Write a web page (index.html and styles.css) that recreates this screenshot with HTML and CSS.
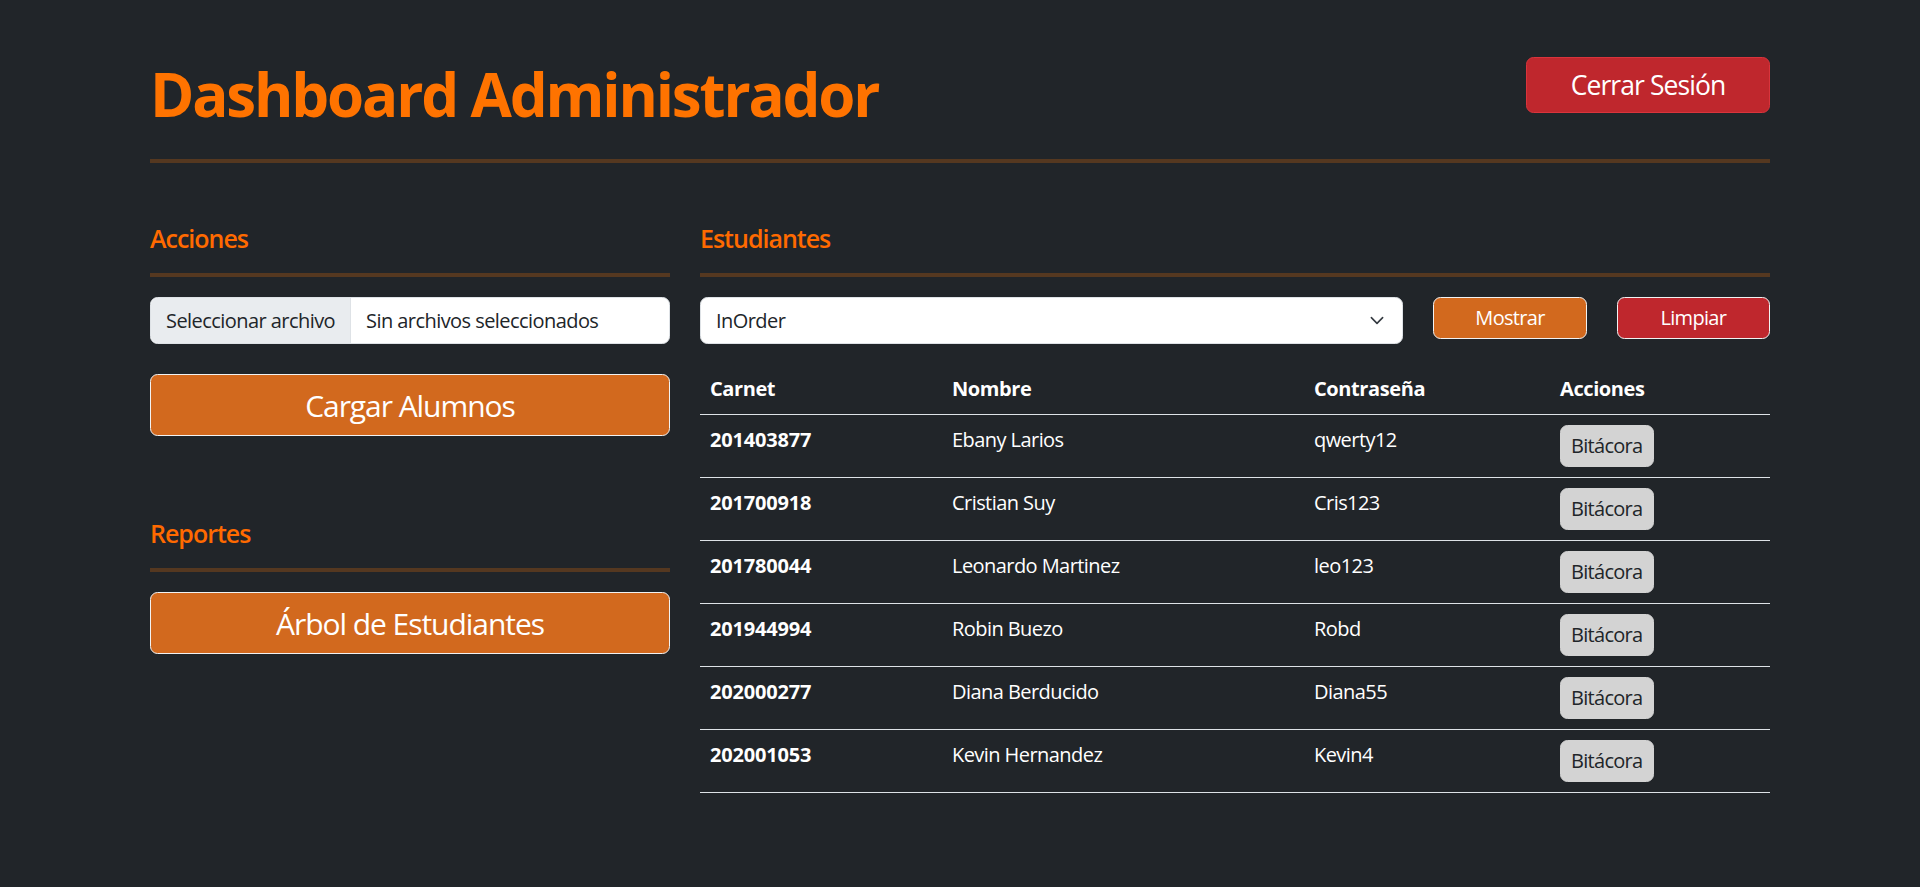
FILE: index.html
```html
<!DOCTYPE html>
<html lang="es">
<head>
<meta charset="utf-8">
<title>Dashboard Administrador</title>
<link rel="stylesheet" href="styles.css">
</head>
<body>
<div class="container">
  <header class="top">
    <h1 class="title">Dashboard Administrador</h1>
    <button class="btn btn-logout">Cerrar Sesión</button>
  </header>
  <hr class="rule">
  <main class="layout">
    <section class="side">
      <h2 class="section-title">Acciones</h2>
      <hr class="rule rule-section">
      <div class="file-input">
        <span class="file-btn">Seleccionar archivo</span>
        <span class="file-name">Sin archivos seleccionados</span>
      </div>
      <button class="btn btn-orange btn-big btn-load">Cargar Alumnos</button>
      <h2 class="section-title section-reports">Reportes</h2>
      <hr class="rule rule-section">
      <button class="btn btn-orange btn-big">Árbol de Estudiantes</button>
    </section>
    <section class="content">
      <h2 class="section-title">Estudiantes</h2>
      <hr class="rule rule-section">
      <div class="controls">
        <div class="select">
          <span>InOrder</span>
          <svg class="chevron" width="20" height="15" viewBox="0 0 16 16" aria-hidden="true"><path d="M2 5l6 6 6-6" fill="none" stroke="#343a40" stroke-width="1.7" stroke-linecap="round" stroke-linejoin="round"/></svg>
        </div>
        <button class="btn btn-orange btn-small">Mostrar</button>
        <button class="btn btn-red btn-small">Limpiar</button>
      </div>
      <table class="students">
        <thead>
          <tr>
            <th class="c-carnet">Carnet</th>
            <th class="c-nombre">Nombre</th>
            <th class="c-pass">Contraseña</th>
            <th>Acciones</th>
          </tr>
        </thead>
        <tbody>
          <tr><td class="carnet">201403877</td><td>Ebany Larios</td><td>qwerty12</td><td><button class="btn btn-log">Bitácora</button></td></tr>
          <tr><td class="carnet">201700918</td><td>Cristian Suy</td><td>Cris123</td><td><button class="btn btn-log">Bitácora</button></td></tr>
          <tr><td class="carnet">201780044</td><td>Leonardo Martinez</td><td>leo123</td><td><button class="btn btn-log">Bitácora</button></td></tr>
          <tr><td class="carnet">201944994</td><td>Robin Buezo</td><td>Robd</td><td><button class="btn btn-log">Bitácora</button></td></tr>
          <tr><td class="carnet">202000277</td><td>Diana Berducido</td><td>Diana55</td><td><button class="btn btn-log">Bitácora</button></td></tr>
          <tr><td class="carnet">202001053</td><td>Kevin Hernandez</td><td>Kevin4</td><td><button class="btn btn-log">Bitácora</button></td></tr>
        </tbody>
      </table>
    </section>
  </main>
</div>
</body>
</html>
```

FILE: styles.css
```css
* {
  box-sizing: border-box;
}

html, body {
  margin: 0;
  padding: 0;
}

body {
  background: #212529;
  color: #ffffff;
  font-family: "Open Sans", "Liberation Sans", sans-serif;
  font-size: 20px;
  line-height: 30px;
  letter-spacing: -0.028em;
  min-height: 887px;
}

.container {
  width: 1650px;
  margin: 0 auto;
  padding: 0 15px;
}

.top {
  display: flex;
  justify-content: space-between;
  align-items: flex-start;
  padding-top: 57px;
}

.title {
  margin: 1px 0 9px;
  font-size: 60px;
  line-height: 72px;
  font-weight: 700;
  letter-spacing: -0.036em;
  color: #ff7300;
}

.btn {
  font-family: inherit;
  letter-spacing: -0.035em;
  color: #ffffff;
  border: 1px solid transparent;
  border-radius: 7.5px;
  cursor: pointer;
  text-align: center;
}

.btn-logout {
  width: 244px;
  height: 56px;
  padding: 0;
  font-size: 26.5px;
  line-height: 36px;
  background: #bf272d;
  border-color: #d9343c;
}

.rule {
  border: 0;
  height: 4px;
  margin: 20px 0 0;
  background: #553820;
}

.rule-section {
  margin: 20px 0;
}

.layout {
  display: grid;
  grid-template-columns: 520px 1070px;
  column-gap: 30px;
  margin-top: 60px;
}

.side, .content {
  display: flex;
  flex-direction: column;
}

.section-title {
  margin: 0;
  font-size: 25px;
  line-height: 30px;
  font-weight: 600;
  letter-spacing: -0.04em;
  color: #ff6a00;
}

.section-reports {
  margin-top: 82px;
}

.file-input {
  display: flex;
  height: 47px;
  background: #ffffff;
  border: 1px solid #dee2e6;
  border-radius: 7.5px;
  overflow: hidden;
  color: #212529;
}

.file-btn {
  padding: 7.5px 15px;
  background: #e9ecef;
  border-right: 1px solid #dee2e6;
}

.file-name {
  padding: 7.5px 15px;
}

.btn-big {
  width: 100%;
  height: 62px;
  padding: 7.5px 15px;
  font-size: 30px;
  line-height: 45px;
}

.btn-orange {
  background: #d2691e;
  border-color: #f2f2f2;
}

.btn-red {
  background: #bf272d;
  border-color: #f2f2f2;
}

.btn-load {
  margin-top: 30px;
}

.controls {
  display: grid;
  grid-template-columns: 703.33px 1fr 1fr;
  column-gap: 30px;
  align-items: start;
}

.select {
  display: flex;
  align-items: center;
  justify-content: space-between;
  height: 47px;
  padding: 7.5px 15px;
  background: #ffffff;
  border: 1px solid #dee2e6;
  border-radius: 7.5px;
  color: #212529;
}

.chevron {
  display: block;
  flex: none;
}

.btn-small {
  height: 42px;
  padding: 5px 15px;
  font-size: 20px;
  line-height: 30px;
}

.students {
  width: 100%;
  margin-top: 20px;
  border-collapse: collapse;
}

.students th,
.students td {
  padding: 10px;
  text-align: left;
  vertical-align: top;
  border-bottom: 1px solid #dee2e6;
  line-height: 30px;
  color: #ffffff;
}

.students th {
  font-weight: 700;
  letter-spacing: -0.02em;
}

.c-carnet { width: 242px; }
.c-nombre { width: 362px; }
.c-pass { width: 246px; }

.students td.carnet {
  font-weight: 700;
  letter-spacing: -0.01em;
}

.btn-log {
  height: 42px;
  padding: 5px 10px;
  font-size: 20px;
  line-height: 30px;
  color: #212529;
  background: #d3d3d3;
  border-color: #d3d3d3;
}
```
